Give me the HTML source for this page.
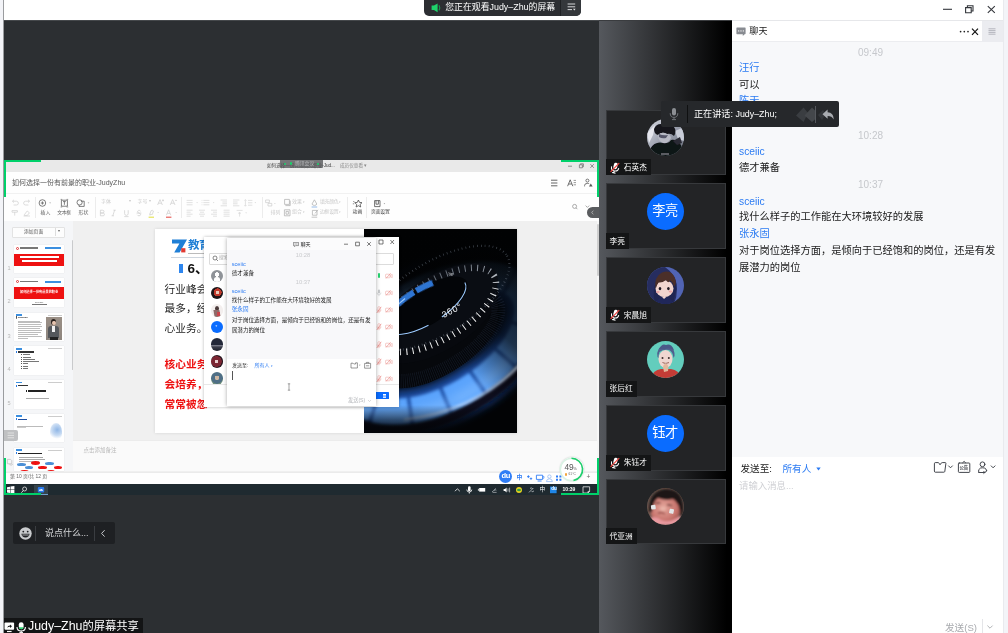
<!DOCTYPE html>
<html lang="zh-CN">
<head>
<meta charset="utf-8">
<title>腾讯会议</title>
<style>
*{box-sizing:border-box;margin:0;padding:0}
html,body{width:1008px;height:633px;overflow:hidden;background:#fff}
body{will-change:transform}
body{position:relative;font-family:"Liberation Sans","Noto Sans CJK SC",sans-serif;color:#1a1a1a;-webkit-font-smoothing:antialiased}
.abs{position:absolute}
.t{position:absolute;white-space:nowrap;line-height:1}
/* ---------- window chrome ---------- */
#topbar{left:0;top:0;width:1008px;height:20px;background:#fff}
#leftstrip{left:0;top:0;width:3px;height:633px;background:#f3f4f8}
#leftline{left:3px;top:0;width:1px;height:633px;background:#9a9c9f}
#rightstrip{left:1003px;top:0;width:5px;height:633px;background:#f3f4f8;border-left:1px solid #e9eaee}
#main{left:4px;top:20px;width:595px;height:613px;background:#2c2f32;border-top:1px solid #45484b}
#notch{left:424.4px;top:0;width:157px;height:16px;background:#2c2e32;border-radius:0 0 5px 5px;overflow:hidden}
#notch .r{left:136px;top:0;width:21px;height:16px;background:#34373b}
/* ---------- participants strip ---------- */
#strip{left:599px;top:20px;width:133px;height:613px;background:linear-gradient(90deg,#55585d 0%,#000 96%);border-top:1px solid #3a3c3f}
.tile{position:absolute;left:605.6px;width:120px;height:65.6px;background:#232426;border:1px solid #37393c}
.tile .av{position:absolute;left:40px;top:8.5px;width:37px;height:37px;border-radius:50%;overflow:hidden}
.tile .lb{position:absolute;left:-1px;bottom:-1px;height:16px;background:#141516;color:#fff;font-size:7.7px;line-height:16px;padding:0 4px 0 4px;white-space:nowrap;display:flex;align-items:center}
.tile .lb svg{margin-right:4.2px;margin-top:1px}.tile .lb span{position:relative;top:.8px}
.txtav{background:#0a6cff;color:#fff;font-size:13.2px;text-align:center;line-height:36px;letter-spacing:-0.3px}
/* ---------- chat panel ---------- */
#chat{left:732px;top:20px;width:271px;height:613px;background:#f7f8fa;border-top:1px solid #e6e7ea}
#chathead{left:0;top:0;width:271px;height:21px;background:#fff;border-bottom:1px solid #ecedf0}
#chatmenu{left:250px;top:0;width:21px;height:21px;background:#ebecf0}
#chatinput{left:0;top:436px;width:271px;height:177px;background:#fff}
.nm{color:#2b7bf3;font-size:10.25px}
.msg{color:#1a1a1a;font-size:10.25px}
.ts{color:#c6c8cc;font-size:10px;left:0;width:277px;text-align:center}
/* ---------- speaking tooltip ---------- */
#tip{left:661px;top:101px;width:178px;height:26px;background:#26282b;border-radius:2px;color:#fff}
/* ---------- shared screen ---------- */
#share{left:4px;top:160px;width:595px;height:335px;background:#f0f0f0;overflow:hidden}

/* shared-screen internals */
#share .g{position:absolute;background:#00d06a}
#share .tb{position:absolute;white-space:nowrap;line-height:1;font-size:4.9px;color:#666}
#share .fa{color:#cacaca}
#share .sep{position:absolute;width:1px;background:#ececec;top:37px;height:21px}
.thumb{position:absolute;left:9.6px;width:50.4px;height:28.5px;background:#fff;overflow:hidden;box-shadow:0 0 1px rgba(0,0,0,.12)}
.thn{position:absolute;left:3.4px;font-size:5.6px;color:#b8b8b8;line-height:1;margin-top:-2px}
</style>
</head>
<body>
<div id="topbar" class="abs">
  <svg class="abs" style="left:940px;top:2px" width="60" height="16" viewBox="0 0 60 16" fill="none" stroke="#33363b" stroke-width="1.1">
    <path d="M3 7.3H12"/>
    <path d="M25.6 5.6H31.2V10.8H25.6Z M27.4 5.4V3.7H33V9H31.4"/>
    <path d="M47.8 4.1L54.8 10.9M54.8 4.1L47.8 10.9"/>
  </svg>
</div>
<div id="main" class="abs">
  <div class="abs" style="left:9px;top:501.3px;width:102px;height:22px;background:#1e2023;border-radius:2px">
    <svg class="abs" style="left:5.5px;top:5px" width="13" height="13" viewBox="0 0 13 13"><circle cx="6.5" cy="6.5" r="6.2" fill="#c9cbce"/><circle cx="4.3" cy="4.6" r=".9" fill="#1e2023"/><circle cx="8.7" cy="4.6" r=".9" fill="#1e2023"/><path d="M2.4 6.8H10.6Q10 10.6 6.5 10.6Q3 10.6 2.4 6.8Z" fill="#1e2023"/><path d="M3.3 7.6H9.7V8.4H3.3Z" fill="#c9cbce"/></svg>
    <div class="abs" style="left:22px;top:3.5px;width:1px;height:15px;background:#3a3d41"></div>
    <div class="t" style="left:32px;top:6.4px;font-size:9px;color:#d7d8da">说点什么...</div>
    <div class="abs" style="left:80.5px;top:3.5px;width:1px;height:15px;background:#3a3d41"></div>
    <svg class="abs" style="left:86px;top:6.5px" width="8" height="9" viewBox="0 0 8 9"><path d="M5.6 1.2L2.6 4.4L5.6 7.6" fill="none" stroke="#c9cbce" stroke-width="1"/></svg>
  </div>
  <div class="abs" style="left:0;top:596.6px;width:139px;height:17px;background:#131415">
    <svg class="abs" style="left:.3px;top:4px" width="24" height="12" viewBox="0 0 24 12"><rect x=".5" y=".5" width="9.6" height="7.2" rx="1" fill="#fff"/><path d="M3 9.5H7.6" stroke="#fff" stroke-width="1.2"/><path d="M3.2 5.8Q3.6 3.6 6 3.5V2.4L8 4.2L6 6V4.8Q4.4 4.7 3.2 5.8Z" fill="#18191b"/><rect x="14.8" y="0.2" width="4.8" height="7" rx="2.4" fill="#fff"/><path d="M14.8 5.2H19.6Q19.4 7.2 17.2 7.2Q15 7.2 14.8 5.2Z" fill="#2fd673"/><path d="M13 5Q13 9 17.2 9Q21.4 9 21.4 5" fill="none" stroke="#fff" stroke-width="1.1"/><path d="M17.2 8.8V10.4M15.4 10.6H19" stroke="#fff" stroke-width="1"/></svg>
    <div class="t" style="left:24px;top:2.9px;font-size:11.3px;color:#fff"><span style="font-size:12.4px">Judy–Zhu</span>的屏幕共享</div>
  </div>
</div>
<div id="strip" class="abs"></div>
<div id="chat" class="abs">
  <div id="chathead" class="abs">
    <svg class="abs" style="left:3.6px;top:5.8px" width="11" height="10" viewBox="0 0 11 10"><path d="M1 0.5H9Q9.6 0.5 9.6 1.1V6.6Q9.6 7.2 9 7.2H8.6L6.8 9V7.2H1Q0.4 7.2 0.4 6.6V1.1Q0.4 0.5 1 0.5Z" fill="#888b91"/><circle cx="2.7" cy="3.9" r=".65" fill="#fff"/><circle cx="5" cy="3.9" r=".65" fill="#fff"/><circle cx="7.3" cy="3.9" r=".65" fill="#fff"/></svg>
    <div class="t" style="left:17.3px;top:5.9px;font-size:9.1px;color:#1a1a1a">聊天</div>
    <svg class="abs" style="left:226px;top:5px" width="22" height="11" viewBox="0 0 22 11"><circle cx="2.6" cy="5.6" r=".85" fill="#222"/><circle cx="6.3" cy="5.6" r=".85" fill="#222"/><circle cx="10" cy="5.6" r=".85" fill="#222"/><path d="M14 2.6L20 8.8M20 2.6L14 8.8" stroke="#111" stroke-width="1.2" fill="none"/></svg>
  </div>
  <div id="chatmenu" class="abs">
    <svg class="abs" style="left:6px;top:7px" width="8" height="7" viewBox="0 0 8 7"><path d="M.5 .8H7.5M.5 2.6H7.5M.5 4.4H7.5M.5 6.2H7.5" stroke="#b4b6bd" stroke-width="1"/></svg>
  </div>
  <div class="t ts" style="top:27px">09:49</div>
  <div class="t nm" style="left:7px;top:42px">汪行</div>
  <div class="t msg" style="left:7px;top:58.5px">可以</div>
  <div class="t nm" style="left:7px;top:75px">陈天</div>
  <div class="t ts" style="top:109.8px">10:28</div>
  <div class="t nm" style="left:7px;top:126px">sceiic</div>
  <div class="t msg" style="left:7px;top:142px">德才兼备</div>
  <div class="t ts" style="top:159px">10:37</div>
  <div class="t nm" style="left:7px;top:175.5px">sceiic</div>
  <div class="t msg" style="left:7px;top:191px">找什么样子的工作能在大环境较好的发展</div>
  <div class="t nm" style="left:7px;top:207.5px">张永固</div>
  <div class="t msg" style="left:7px;top:225px">对于岗位选择方面，是倾向于已经饱和的岗位，还是有发</div>
  <div class="t msg" style="left:7px;top:241.5px">展潜力的岗位</div>
  <div id="chatinput" class="abs">
    <div class="t" style="left:8.5px;top:6.5px;font-size:9.6px;color:#1a1a1a">发送至:</div>
    <div class="t" style="left:50.5px;top:6.5px;font-size:9.6px;color:#2b7bf3">所有人</div>
    <svg class="abs" style="left:83.5px;top:9.5px" width="5" height="4" viewBox="0 0 5 4"><path d="M0.3 .5H4.7L2.5 3.6Z" fill="#2b7bf3"/></svg>
    <svg class="abs" style="left:200px;top:3.4px" width="66" height="15" viewBox="0 0 66 15" fill="none" stroke="#43464d" stroke-width="1" stroke-linejoin="round" stroke-linecap="round">
      <path d="M2.4 3.4Q2.4 2.6 3.2 2.6H6.2Q6.8 2.6 7.2 3.4L8 4.8L9.4 2.9Q9.7 2.6 10.2 2.6H13.2Q14 2.6 13.9 3.4L12.8 11.4Q12.7 12.2 11.9 12.2H3.2Q2.4 12.2 2.4 11.4Z"/>
      <path d="M16.6 5.9L18.5 7.8L20.4 5.9" stroke-width="1"/>
      <path d="M27.2 3H37Q37.8 3 37.8 3.8V11.6Q37.8 12.4 37 12.4H27.2Q26.4 12.4 26.4 11.6V3.8Q26.4 3 27.2 3Z"/>
      <path d="M30.6 2.8L32.1 1.3L33.6 2.8" stroke-width=".9"/>
      <path d="M46.6 12.4Q45.8 9 48.6 8Q50.5 7.6 52.4 8Q54.6 8.8 54.6 10.6M47 12.5H52.6M52.6 12.5Q54.4 12.4 54.8 10.6M51.8 11.4L52.8 12.5L51.8 13.4" />
      <path d="M59.2 5.9L61.1 7.8L63 5.9" stroke-width="1"/><circle cx="50.5" cy="4.3" r="2.4"/>
    </svg>
    <div class="t" style="left:227.6px;top:8.8px;font-size:4.4px;font-weight:bold;color:#43464d;letter-spacing:-.2px">公告</div>
    <div class="t" style="left:7px;top:24px;font-size:9.4px;color:#cfd0d4">请输入消息...</div>
    <div class="t" style="left:213px;top:165.5px;font-size:9.6px;color:#a8aaae">发送(S)</div>
    <div class="abs" style="left:250px;top:162px;width:1px;height:15px;background:#e4e5e8"></div>
    <svg class="abs" style="left:254px;top:167px" width="8" height="6" viewBox="0 0 8 6"><path d="M1.4 1.6L4 4.2L6.6 1.6" fill="none" stroke="#a8aaae" stroke-width=".9"/></svg>
  </div>
</div>
<div id="share" class="abs">
  <!-- title strip -->
  <div class="abs" style="left:0;top:0;width:595px;height:11.8px;background:#e9e9e9"></div>
  <div class="t" style="left:263px;top:4.4px;font-size:4.6px;color:#333">如何选择一份有前景的职业-Jud...</div>
  <div class="t" style="left:336px;top:4.4px;font-size:4.6px;color:#888">成员仅查看 ▾</div>
  <div class="abs" style="left:276px;top:0;width:43px;height:8px;background:rgba(84,86,88,.78);border-radius:0 0 1px 1px">
    <div class="abs" style="left:4px;top:3px;width:2px;height:2px;border-radius:50%;background:#19d36b"></div>
    <div class="abs" style="left:10px;top:2.4px;width:2.4px;height:2.4px;border-radius:50%;background:#19d36b"></div>
    <div class="t" style="left:15px;top:1.5px;font-size:4.8px;color:#b9bbbd">腾讯会议</div>
    <div class="abs" style="left:36.5px;top:2.6px;width:2.2px;height:2.2px;border-radius:50%;background:#19d36b"></div>
  </div>
  <svg class="abs" style="left:560px;top:2px" width="34" height="8" viewBox="0 0 34 8" fill="none" stroke="#666" stroke-width=".7"><path d="M4 4.2H8"/><path d="M15.4 2.8H18.4V5.8H15.4Z M16.4 2.6V1.8H19.4V4.8H18.6"/><path d="M26.4 2.2L29.8 5.8M29.8 2.2L26.4 5.8"/></svg>
  <!-- doc header -->
  <div class="abs" style="left:0;top:11.8px;width:595px;height:22.2px;background:#fefefe;border-bottom:1px solid #f1f1f1"></div>
  <div class="t" style="left:8px;top:19.4px;font-size:7px;color:#585858">如何选择一份有前景的职业-JudyZhu</div>
  <svg class="abs" style="left:544px;top:17px" width="48" height="12" viewBox="0 0 48 12" fill="none" stroke="#555" stroke-width=".9"><path d="M3 3.2H9.4M3 6H9.4M3 8.8H9.4"/><path d="M19.6 9.2L22.2 2.8L24.8 9.2M20.6 7H23.8" stroke-width=".85"/><path d="M25.6 3.4H28M25.6 5.6H28M25.6 7.8H28" stroke-width=".6"/><circle cx="39.4" cy="3.6" r="1.5" stroke-width=".8"/><path d="M36.6 9.4V8.4Q36.6 6.4 39.4 6.4Q40.6 6.4 41.2 6.8" stroke-width=".8"/><path d="M41 9.4L42.8 6.4L44.6 9.4Z" fill="#555" stroke="none"/></svg>
  <!-- toolbar -->
  <div class="abs" style="left:0;top:34px;width:595px;height:27px;background:#fefefe"></div>
  <svg class="abs" style="left:5px;top:37px" width="28" height="22" viewBox="0 0 28 22" fill="none" stroke="#cfcfcf" stroke-width=".7"><path d="M3.6 4.2H7.4Q9.4 4.4 9.4 6.2Q9.4 8 7.4 8H4.6M5 2.8L3.4 4.2L5 5.6"/><path d="M20.4 4.2H16.6Q14.6 4.4 14.6 6.2Q14.6 8 16.6 8H19.4M19 2.8L20.6 4.2L19 5.6"/><path d="M3 13.6H8.4V15.2H3Z M5.7 15.2V18.6"/><path d="M15.4 17.6L18.2 14L20.4 15.8L18.4 18.4H15.4ZM14.6 19H21"/></svg>
  <div class="sep" style="left:30.5px"></div>
  <svg class="abs" style="left:32px;top:37px" width="58" height="12" viewBox="0 0 58 12" fill="none" stroke="#555" stroke-width=".75"><circle cx="6.4" cy="6" r="3.3"/><path d="M4.8 6H8M6.4 4.4V7.6"/><path d="M13.2 5.4H15L14.1 6.6Z" fill="#999" stroke="none"/><path d="M25.4 3.2H31.4V9.2H25.4Z M27 4.6H29.8M28.4 4.6V7.8" /><path d="M24.6 2.4H26.2M30.6 2.4H32.2M24.6 10H26.2M30.6 10H32.2" stroke-width=".6"/><circle cx="43.6" cy="5.4" r="2.6"/><path d="M45 4.2H48.2V9.4H43V8"/><path d="M51.6 5.4H53.4L52.5 6.6Z" fill="#999" stroke="none"/></svg>
  <div class="tb" style="left:36.5px;top:50.6px">插入</div>
  <div class="tb" style="left:53.2px;top:50.6px;letter-spacing:-.3px">文本框</div>
  <div class="tb" style="left:74.6px;top:50.6px">形状</div>
  <div class="sep" style="left:90.5px"></div>
  <div class="tb fa" style="left:97px;top:39.6px">字体</div>
  <div class="tb fa" style="left:125px;top:40px;font-size:3.6px">▾</div>
  <div class="tb fa" style="left:133.6px;top:39.6px">字号</div>
  <div class="tb fa" style="left:145px;top:40px;font-size:3.6px">▾</div>
  <svg class="abs" style="left:93px;top:37px" width="90" height="22" viewBox="0 0 90 22" fill="none" stroke="#cdcdcd" stroke-width=".7"><path d="M60.6 8L63 2.6L65.4 8M61.4 6.2H64.6M66 2.4V4.4M65 3.4H67" /><path d="M73.2 8L75.6 2.6L78 8M74 6.2H77.2M78 3.4H80"/><path d="M3.4 13.2H5.8Q7 13.4 7 14.6Q7 15.8 5.8 16H3.4ZM3.4 16H6.2Q7.4 16.2 7.4 17.4Q7.4 18.8 6.2 18.8H3.4Z"/><path d="M17.6 13.2L15.8 18.8M16.4 13.2H18.8M14.6 18.8H17"/><path d="M27.6 13.2V16.6Q27.6 18.4 29.4 18.4Q31.2 18.4 31.2 16.6V13.2M27.2 19.6H31.6"/><path d="M43.6 14.2Q42.8 13.2 41.6 13.4Q40.4 13.8 40.6 15Q41 16 42.2 16.2Q43.6 16.6 43.6 17.6Q43.4 18.8 42 18.8Q40.8 18.8 40.2 17.8M39.6 16.1H44.4"/><path d="M52.6 17.4L54.2 13.6Q55.4 12.8 56.4 14L55.4 17.4ZM53 17.6V18.6" /><path d="M51.6 20.2H57" stroke="#e3e04a" stroke-width="1.1"/><path d="M69.4 18.2L71.6 12.8L73.8 18.2M70.2 16.4H73"/><path d="M69 20.2H74.4" stroke="#e5524d" stroke-width="1.1"/><path d="M60.4 15H61.8L61.1 16Z M78.4 15H79.8L79.1 16Z" fill="#ccc" stroke="none"/></svg>
  <div class="sep" style="left:177px"></div>
  <svg class="abs" style="left:180px;top:37px" width="80" height="22" viewBox="0 0 80 22" fill="none" stroke="#d5d5d5" stroke-width=".7"><path d="M2.6 3.4H8.6M2.6 5.6H8.6M2.6 7.8H8.6"/><path d="M19.4 3.4H25.4M19.4 5.6H25.4M19.4 7.8H25.4M17.6 3.4H18.4M17.6 5.6H18.4M17.6 7.8H18.4"/><path d="M36.6 3H43M38.4 5H43M38.4 6.8H43M36.6 8.8H43"/><path d="M49 3H55.4M49 5H53.6M49 6.8H53.6M49 8.8H55.4"/><path d="M61.4 2.6V9.2M60.4 3.6L61.4 2.6L62.4 3.6M60.4 8.2L61.4 9.2L62.4 8.2M64 3.4H68.4M64 5.8H68.4M64 8.2H68.4"/><path d="M2.6 13.2H8.6M2.6 15.2H6.6M2.6 17.2H8.6M2.6 19.2H6.6"/><path d="M15 13.2H21M16 15.2H20M15 17.2H21M16 19.2H20"/><path d="M27 13.2H33M29 15.2H33M27 17.2H33M29 19.2H33"/><path d="M39.6 13.2H45.6M39.6 15.2H45.6M39.6 17.2H45.6M39.6 19.2H45.6"/><path d="M52.6 13.4H58.6M55.6 15V19.6M54.2 16.2H57" /><path d="M12.4 5.2H13.8L13.1 6.2Z M29 5.2H30.4L29.7 6.2Z M70.6 5.2H72L71.3 6.2Z M61.4 15.6H62.8L62.1 16.6Z" fill="#ccc" stroke="none"/></svg>
  <div class="sep" style="left:257.5px"></div>
  <svg class="abs" style="left:258px;top:37px" width="90" height="22" viewBox="0 0 90 22" fill="none" stroke="#cdcdcd" stroke-width=".7"><path d="M3.6 3H7.4V5.6H3.6ZM6 6.4H9.8V9H6Z"/><path d="M12.2 6H13.6L12.9 7Z" fill="#ccc" stroke="none"/><path d="M22.6 2.4H27.4V7.4H22.6ZM23.4 8.6H28.2V3.6" stroke="#aaa"/><path d="M22.4 12.8H28V18.8H22.4ZM24 14.4H26.4V17.2H24Z" stroke="#aaa"/><path d="M50 7L52.4 2.8L54.8 7Q54.4 8.4 52.4 8.4Q50.4 8.4 50 7Z" stroke="#aaa"/><path d="M49.6 10H55.2" stroke="#8ab4e8" stroke-width=".9"/><path d="M50.4 13.4H55V18.2H50.4ZM53 16.4L56 12.8" stroke="#aaa"/><path d="M49.6 20.2H55.2" stroke="#bbb" stroke-width=".9"/></svg>
  <div class="tb fa" style="left:266.5px;top:50.6px">排列</div>
  <div class="tb fa" style="left:288px;top:39.8px">效果 <span style="font-size:3.4px">▾</span></div>
  <div class="tb fa" style="left:288px;top:50.4px">组合 <span style="font-size:3.4px">▾</span></div>
  <div class="tb fa" style="left:316px;top:39.8px;letter-spacing:-.3px">填充颜色 <span style="font-size:3.4px">▾</span></div>
  <div class="tb fa" style="left:316px;top:50.4px;letter-spacing:-.3px">边框设置 <span style="font-size:3.4px">▾</span></div>
  <div class="sep" style="left:343px"></div>
  <svg class="abs" style="left:346px;top:38px" width="46" height="12" viewBox="0 0 46 12" fill="none" stroke="#444" stroke-width=".75"><path d="M8.4 2L9.5 4.4L12 4.7L10.1 6.4L10.7 9L8.4 7.7L6.1 9L6.7 6.4L4.8 4.7L7.3 4.4Z"/><path d="M3.2 3.4L4.6 4M2.8 5.8H4.2" stroke-width=".6"/><path d="M24.6 2.6H30V8.6H24.6ZM26 2.6V6.2H28.4V2.6" /><path d="M33.6 5.2H35.2L34.4 6.2Z" fill="#888" stroke="none"/></svg>
  <div class="tb" style="left:348.5px;top:50.4px;color:#444">动画</div>
  <div class="sep" style="left:362px"></div>
  <div class="tb" style="left:367px;top:50.4px;color:#444;letter-spacing:-.25px">页面设置</div>
  <svg class="abs" style="left:566px;top:42px" width="24" height="10" viewBox="0 0 24 10" fill="none" stroke="#888" stroke-width=".7"><circle cx="4.6" cy="4.4" r="2"/><path d="M6 5.8L7.4 7.2"/><path d="M15.6 3.6L17.4 5.4L19.2 3.6"/></svg>
  <!-- body -->
  <div class="abs" style="left:0;top:61px;width:69px;height:250px;background:#f5f6f8"></div>
  <div class="abs" style="left:69px;top:61px;width:526px;height:219px;background:#f0f0f0"></div>
  <div class="abs" style="left:8px;top:66.5px;width:53px;height:11px;background:#fdfdfd;border:.5px solid #e3e3e3;border-radius:1px"></div>
  <div class="abs" style="left:51px;top:68px;width:.6px;height:8px;background:#ddd"></div>
  <div class="tb" style="left:20px;top:69.6px;font-size:4.8px;color:#555">添加页面</div>
  <div class="tb" style="left:54.4px;top:70px;font-size:3.6px;color:#666">▾</div>
  <div class="abs" style="left:67.5px;top:80px;width:1.6px;height:130px;background:#c9cacc;border-radius:1px"></div>
  <div class="thumb" style="top:84.6px;height:28.5px"><div class="abs" style="left:2px;top:2px;width:3px;height:3px;border-radius:50%;border:.7px solid #d33"></div><div class="abs" style="left:6.0px;top:2.8px;width:18.0px;height:1.2px;background:#777"></div><div class="abs" style="left:31.0px;top:2.6px;width:16.0px;height:1.6px;background:#3b8fe0"></div><div class="abs" style="left:0.0px;top:9.0px;width:51.0px;height:12.5px;background:#ee1111"></div><div class="abs" style="left:6.0px;top:11.4px;width:39.0px;height:1.8px;background:#fff"></div><div class="abs" style="left:8.0px;top:15.6px;width:35.0px;height:1.8px;background:#fff"></div></div><div class="thn" style="top:107.6px">1</div>
  <div class="thumb" style="top:118.4px;height:28.5px"><div class="abs" style="left:2px;top:2px;width:3px;height:3px;border-radius:50%;border:.7px solid #d33"></div><div class="abs" style="left:6.0px;top:2.8px;width:18.0px;height:1.2px;background:#777"></div><div class="abs" style="left:31.0px;top:2.6px;width:16.0px;height:1.6px;background:#3b8fe0"></div><div class="abs" style="left:0.0px;top:8.6px;width:51.0px;height:12.5px;background:#ee1111"></div><div class="t" style="left:0;width:51px;text-align:center;top:13px;font-size:3.2px;color:#fff;font-weight:bold">如何选择一份有前景的职业</div><div class="t" style="left:0;width:51px;text-align:center;top:22.4px;font-size:2.2px;color:#555">JudyZhu</div><div class="abs" style="left:18.0px;top:25.6px;width:15.0px;height:0.8px;background:#777"></div></div><div class="thn" style="top:141.4px">2</div>
  <div class="thumb" style="top:152.5px;height:28.5px"><div class="abs" style="left:2.0px;top:1.8px;width:6.0px;height:1.5px;background:#3b8fe0"></div><div class="abs" style="left:34.0px;top:2.2px;width:14.0px;height:0.6px;background:#ccc"></div><div class="t" style="left:2.5px;top:4.6px;font-size:2.4px;color:#333;font-weight:bold">▌JudyZhu</div><div class="abs" style="left:4.0px;top:8.0px;width:22.0px;height:0.6px;background:#bdbdbd"></div><div class="abs" style="left:4.0px;top:9.9px;width:24.0px;height:0.6px;background:#bdbdbd"></div><div class="abs" style="left:4.0px;top:11.8px;width:23.0px;height:0.6px;background:#bdbdbd"></div><div class="abs" style="left:4.0px;top:13.7px;width:24.0px;height:0.6px;background:#bdbdbd"></div><div class="abs" style="left:4.0px;top:15.6px;width:22.0px;height:0.6px;background:#bdbdbd"></div><div class="abs" style="left:4.0px;top:17.5px;width:24.0px;height:0.6px;background:#bdbdbd"></div><div class="abs" style="left:4.0px;top:19.4px;width:23.0px;height:0.6px;background:#bdbdbd"></div><div class="abs" style="left:4.0px;top:21.3px;width:20.0px;height:0.6px;background:#bdbdbd"></div><div class="abs" style="left:4.0px;top:23.2px;width:24.0px;height:0.6px;background:#bdbdbd"></div><div class="abs" style="left:4.0px;top:25.1px;width:10.0px;height:0.6px;background:#bdbdbd"></div><div class="abs" style="left:32px;top:4.5px;width:16px;height:23px;background:linear-gradient(180deg,#9a8f86 0%,#8d857e 100%)"><div class="abs" style="left:5.4px;top:2px;width:5.4px;height:6.4px;border-radius:50%;background:#2a211d"></div><div class="abs" style="left:6.2px;top:3.6px;width:3.8px;height:4.6px;border-radius:50%;background:#e6c3ae"></div><div class="abs" style="left:2.6px;top:8.6px;width:11px;height:12px;border-radius:3px 3px 0 0;background:#55585c"></div><div class="abs" style="left:6.6px;top:8.6px;width:3px;height:6px;background:#f1f1f1"></div><div class="abs" style="left:4px;top:20px;width:8.4px;height:3px;background:#222"></div></div></div><div class="thn" style="top:175.5px">3</div>
  <div class="thumb" style="top:186.3px;height:28.5px"><div class="abs" style="left:2.0px;top:1.8px;width:6.0px;height:1.5px;background:#3b8fe0"></div><div class="abs" style="left:34.0px;top:2.2px;width:14.0px;height:0.6px;background:#ccc"></div><div class="abs" style="left:2.5px;top:4.8px;width:1.0px;height:2.0px;background:#2a7be4"></div><div class="abs" style="left:4.5px;top:5.0px;width:16.0px;height:1.3px;background:#333"></div><div class="abs" style="left:9.0px;top:8.0px;width:7.0px;height:0.6px;background:#777"></div><div class="abs" style="left:7.0px;top:8.0px;width:0.7px;height:0.7px;background:#555"></div><div class="abs" style="left:9.0px;top:10.3px;width:8.0px;height:0.6px;background:#777"></div><div class="abs" style="left:7.0px;top:10.3px;width:0.7px;height:0.7px;background:#555"></div><div class="abs" style="left:9.0px;top:12.6px;width:12.0px;height:0.6px;background:#777"></div><div class="abs" style="left:7.0px;top:12.6px;width:0.7px;height:0.7px;background:#555"></div><div class="abs" style="left:9.0px;top:14.9px;width:16.0px;height:0.6px;background:#777"></div><div class="abs" style="left:7.0px;top:14.9px;width:0.7px;height:0.7px;background:#555"></div><div class="abs" style="left:9.0px;top:17.2px;width:5.0px;height:0.6px;background:#777"></div><div class="abs" style="left:7.0px;top:17.2px;width:0.7px;height:0.7px;background:#555"></div><div class="abs" style="left:9.0px;top:19.5px;width:5.0px;height:0.6px;background:#777"></div><div class="abs" style="left:7.0px;top:19.5px;width:0.7px;height:0.7px;background:#555"></div><div class="abs" style="left:9.0px;top:21.8px;width:5.0px;height:0.6px;background:#777"></div><div class="abs" style="left:7.0px;top:21.8px;width:0.7px;height:0.7px;background:#555"></div></div><div class="thn" style="top:209.3px">4</div>
  <div class="thumb" style="top:220.0px;height:28.5px"><div class="abs" style="left:2.0px;top:1.8px;width:6.0px;height:1.5px;background:#3b8fe0"></div><div class="abs" style="left:34.0px;top:2.2px;width:14.0px;height:0.6px;background:#ccc"></div><div class="abs" style="left:2.5px;top:4.8px;width:1.0px;height:2.0px;background:#2a7be4"></div><div class="abs" style="left:4.5px;top:5.0px;width:10.0px;height:1.3px;background:#333"></div><div class="abs" style="left:12.0px;top:10.4px;width:1.5px;height:1.6px;background:#222"></div><div class="abs" style="left:14.5px;top:10.4px;width:18.0px;height:1.6px;background:#222"></div><div class="abs" style="left:12.0px;top:17.6px;width:23.0px;height:0.6px;background:#aaa"></div></div><div class="thn" style="top:243.0px">5</div>
  <div class="thumb" style="top:253.7px;height:28.5px"><div class="abs" style="left:2.0px;top:1.8px;width:6.0px;height:1.5px;background:#3b8fe0"></div><div class="abs" style="left:34.0px;top:2.2px;width:14.0px;height:0.6px;background:#ccc"></div><div class="abs" style="left:2.5px;top:4.8px;width:1.0px;height:2.0px;background:#2a7be4"></div><div class="abs" style="left:4.5px;top:5.0px;width:9.0px;height:1.3px;background:#1f4fa0"></div><div class="abs" style="left:3.0px;top:12.0px;width:26.0px;height:0.6px;background:#bbb"></div><div class="abs" style="left:3.0px;top:13.8px;width:9.0px;height:0.6px;background:#ccc"></div><div class="abs" style="left:36px;top:9px;width:12px;height:17px;border-radius:50% 50% 40% 40%;background:radial-gradient(circle at 60% 40%,#8fb6e6 0,#c9dcf3 45%,rgba(255,255,255,0) 72%)"></div></div><div class="thn" style="top:276.7px">6</div>
  <div class="thumb" style="top:287.5px;height:23.0px"><div class="abs" style="left:2.0px;top:1.8px;width:6.0px;height:1.5px;background:#3b8fe0"></div><div class="abs" style="left:34.0px;top:2.2px;width:14.0px;height:0.6px;background:#ccc"></div><div class="abs" style="left:2.5px;top:4.8px;width:1.0px;height:2.0px;background:#2a7be4"></div><div class="abs" style="left:4.5px;top:5.0px;width:24.0px;height:1.3px;background:#222"></div><div class="abs" style="left:5.0px;top:9.0px;width:24.0px;height:0.5px;background:#aaa"></div><div class="abs" style="left:5.0px;top:11.0px;width:26.0px;height:0.5px;background:#aaa"></div><div class="abs" style="left:5.0px;top:13.0px;width:20.0px;height:0.5px;background:#bbb"></div><div class="abs" style="left:3.5px;top:15.0px;width:8.6px;height:3.8px;border-radius:50%;background:#4a8fd6"></div><div class="abs" style="left:17.6px;top:13.6px;width:8.6px;height:3.8px;border-radius:50%;background:#ee1111"></div><div class="abs" style="left:31.5px;top:14.0px;width:8.6px;height:3.8px;border-radius:50%;background:#4a8fd6"></div><div class="abs" style="left:11.0px;top:18.2px;width:8.6px;height:3.8px;border-radius:50%;background:#4a8fd6"></div><div class="abs" style="left:24.4px;top:18.2px;width:8.6px;height:3.8px;border-radius:50%;background:#ee1111"></div><div class="abs" style="left:40.0px;top:18.0px;width:8.6px;height:3.8px;border-radius:50%;background:#ee1111"></div><div class="abs" style="left:6.5px;top:22.4px;width:8.6px;height:3.8px;border-radius:50%;background:#ee1111"></div><div class="abs" style="left:33.0px;top:22.6px;width:8.6px;height:3.8px;border-radius:50%;background:#ee1111"></div></div>
  <div class="abs" style="left:0;top:269.5px;width:13.5px;height:11.5px;background:#bfc0c2;border-radius:0 2px 2px 0"><svg class="abs" style="left:3px;top:2.6px" width="8" height="7" viewBox="0 0 8 7"><path d="M.6 1H7M.6 3.4H7M.6 5.8H7" stroke="#e8e8e8" stroke-width=".8"/></svg></div>
  <svg class="abs" style="left:2px;top:298px" width="8" height="9" viewBox="0 0 8 9" fill="none" stroke="#bbb" stroke-width=".7"><path d="M1.4 1.4H4.6L5.8 2.6V5.8H1.4ZM3.4 6.6Q5.4 7.8 6.8 6.4"/></svg>
  <!-- slide -->
  <div class="abs" style="left:151px;top:69px;width:362px;height:204px;background:#fff;box-shadow:0 0 3px rgba(0,0,0,.12)"></div>
  <svg class="abs" style="left:167px;top:79px" width="17" height="14" viewBox="0 0 17 14"><path d="M1 .6H16L8.6 13.4H3.2L8.4 4.6H1Z" fill="#1f7fd6"/><rect x="10.2" y="9.2" width="4.2" height="4.2" fill="#e23b32"/></svg>
  <div class="t" style="left:184px;top:80px;font-size:11.5px;font-weight:bold;color:#1f7fd6;letter-spacing:-.5px">教育</div>
  <div class="abs" style="left:184px;top:93px;width:30px;height:.6px;background:#bbb"></div>
  <div class="abs" style="left:167px;top:97px;width:190px;height:.6px;background:#cfd6de"></div>
  <div class="abs" style="left:174.8px;top:103.5px;width:4px;height:9.5px;background:#2e86ee"></div>
  <div class="t" style="left:183.5px;top:101.5px;font-size:13.5px;font-weight:bold;color:#111">6、</div>
  <div class="t" style="left:160.6px;top:123.6px;font-size:10.7px;color:#222">行业峰会</div>
  <div class="t" style="left:160.6px;top:143.2px;font-size:10.7px;color:#222">最多，经</div>
  <div class="t" style="left:160.6px;top:162.8px;font-size:10.7px;color:#222">心业务。</div>
  <div class="t" style="left:160.6px;top:199px;font-size:10.7px;font-weight:bold;color:#ee1111">核心业务</div>
  <div class="t" style="left:160.6px;top:218.8px;font-size:10.7px;font-weight:bold;color:#ee1111">会培养，</div>
  <div class="t" style="left:160.6px;top:238.6px;font-size:10.7px;font-weight:bold;color:#ee1111">常常被忽</div>
  <svg class="abs" style="left:359.6px;top:69px" width="153.4" height="204" viewBox="0 0 154 204" preserveAspectRatio="none">
    <defs>
      <filter id="b1" x="-20%" y="-20%" width="140%" height="140%"><feGaussianBlur stdDeviation="1.4"/></filter>
      <filter id="b3" x="-30%" y="-30%" width="160%" height="160%"><feGaussianBlur stdDeviation="5"/></filter>
      <filter id="b05" x="-20%" y="-20%" width="140%" height="140%"><feGaussianBlur stdDeviation=".45"/></filter>
      <linearGradient id="fadeTop" x1="0" y1="0" x2=".35" y2="1"><stop offset="0" stop-color="#010203" stop-opacity="1"/><stop offset=".34" stop-color="#010203" stop-opacity=".86"/><stop offset=".58" stop-color="#010203" stop-opacity="0"/></linearGradient>
      <linearGradient id="fadeBot" x1="0" y1="0" x2="0" y2="1"><stop offset="0" stop-color="#020305" stop-opacity="0"/><stop offset=".55" stop-color="#020305" stop-opacity=".6"/><stop offset="1" stop-color="#020305" stop-opacity=".92"/></linearGradient>
      <linearGradient id="fadeR" x1="1" y1="0" x2=".55" y2=".62"><stop offset="0" stop-color="#010203" stop-opacity="1"/><stop offset=".62" stop-color="#010203" stop-opacity=".72"/><stop offset="1" stop-color="#010203" stop-opacity="0"/></linearGradient>
      <linearGradient id="tk" gradientUnits="userSpaceOnUse" x1="0" y1="-30" x2="0" y2="22"><stop offset="0" stop-color="#5d6570"/><stop offset=".55" stop-color="#aab1bb"/><stop offset="1" stop-color="#ffffff"/></linearGradient>
      <clipPath id="imgc"><rect width="154" height="204"/></clipPath>
    </defs>
    <g clip-path="url(#imgc)">
      <rect width="154" height="204" fill="#020305"/>
      <g transform="translate(74 114) rotate(-30)">
        <ellipse rx="100" ry="56" fill="none" stroke="#1b4ea3" stroke-width="44" filter="url(#b3)"/>
        <ellipse rx="101" ry="57" fill="none" stroke="#5aa3fc" stroke-width="30" stroke-dasharray="34 3.5" filter="url(#b1)"/>
        <ellipse rx="103" ry="59" fill="none" stroke="#8cc2ff" stroke-width="10" stroke-dasharray="34 3.5" filter="url(#b3)" opacity=".55"/>
        <ellipse rx="119" ry="73" fill="none" stroke="#07101f" stroke-width="10" filter="url(#b1)"/>
      </g>
      <rect width="154" height="204" fill="url(#fadeR)"/>
      <rect width="154" height="204" fill="url(#fadeTop)"/>
      <g transform="translate(74 78) rotate(-31)">
        <ellipse cx="-19" cy="32" rx="68" ry="31" fill="#05070b"/>
        <ellipse cx="-13" cy="22" rx="68" ry="31" fill="#06080c"/>
        <ellipse cx="-6" cy="11" rx="68" ry="31" fill="#07090e"/>
        <ellipse cx="-15" cy="26" rx="68" ry="31" fill="none" stroke="#27324a" stroke-width="14" stroke-dasharray=".6 1.5" opacity=".45"/>
        <ellipse rx="68" ry="31" fill="#0a0d13"/>
        <ellipse cx="4" cy="-8" rx="82" ry="36" fill="none" stroke="#7c8694" stroke-width="2.2" stroke-dasharray=".7 3.2" opacity=".5"/>
        <ellipse cx="-1.5" cy="2.5" rx="66" ry="29" fill="none" stroke="url(#tk)" stroke-width="6.5" stroke-dasharray="1 5.3" opacity=".95"/>
        <ellipse cx="-10" cy="-7" rx="48" ry="19" fill="#030508"/>
        <ellipse cx="-12" cy="-11" rx="42" ry="14" fill="none" stroke="#2f74d2" stroke-width="6" stroke-dasharray="0 96 20 3 20 3 18 400" filter="url(#b05)"/>
        <ellipse cx="-10" cy="-7" rx="46" ry="18" fill="none" stroke="#9ccaff" stroke-width="1.1" stroke-dasharray="44 16 84 400"/>
      </g>
      <text x="80" y="89" font-size="8.8" fill="#f3f5f8" font-family="Liberation Sans,sans-serif" letter-spacing=".9" transform="rotate(-27 80 89)">360°</text>
      <text x="84" y="46" font-size="4" fill="#dfe3e8" font-family="Liberation Sans,sans-serif" transform="rotate(10 84 46)">'08</text>
      <path d="M156 136Q112 182 40 191" stroke="#dcebff" stroke-width="2.2" fill="none" filter="url(#b1)" opacity=".8"/>
      <rect x="0" y="176" width="154" height="28" fill="url(#fadeBot)"/>
    </g>
  </svg>
  <!-- notes -->
  <div class="abs" style="left:69px;top:280px;width:526px;height:31px;background:#fafafa;border-top:1px solid #ececec"></div>
  <div class="t" style="left:79.5px;top:287.8px;font-size:5.5px;color:#b9b9b9">点击添加备注</div>
  <div class="abs" style="left:592.5px;top:61px;width:2.5px;height:250px;background:#f7f7f7"></div>
  <div class="abs" style="left:593px;top:64px;width:1.6px;height:52px;background:#cfcfcf;border-radius:1px"></div>
  <!-- status bar -->
  <div class="abs" style="left:0;top:311.6px;width:595px;height:12px;background:#fefefe;border-top:1px solid #ebebeb"></div>
  <div class="t" style="left:6px;top:315px;font-size:4.9px;color:#666;margin-top:.4px">第 10 页/共 12 页</div>
  <div class="abs" style="left:495.4px;top:309.5px;width:13px;height:13px;border-radius:50%;background:#2f7df6"></div>
  <div class="t" style="left:497.6px;top:311.8px;font-size:7.6px;color:#fff;font-weight:bold;letter-spacing:-.4px">du</div>
  <div class="t" style="left:512.6px;top:315px;font-size:5.8px;color:#2f7df6;font-weight:bold">中</div>
  <svg class="abs" style="left:521px;top:313px" width="45" height="10" viewBox="0 0 45 10" fill="none" stroke="#2f7df6" stroke-width=".9"><circle cx="3.4" cy="3.6" r=".8" fill="#2f7df6"/><circle cx="6" cy="5.6" r=".7" fill="#2f7df6"/><path d="M11.4 2.2H17.6V6.4H11.4ZM12.6 8H16.6" /><path d="M18 3.4H19V5.2H18" stroke-width=".6"/><circle cx="24.4" cy="3.6" r="1.7" stroke="#9dbff5"/><path d="M21.4 8.6Q21.6 5.8 24.4 5.8Q27.2 5.8 27.4 8.6Z" stroke="#9dbff5"/><path d="M31 2.4H33V4.4H31ZM34.4 2.4H36.4V4.4H34.4ZM31 5.8H33V7.8H31ZM34.4 5.8H36.4V7.8H34.4Z" fill="#2f7df6" stroke="none"/></svg>
  <div class="t" style="left:582.4px;top:314.4px;font-size:6.6px;color:#666">+</div>
  <div class="abs" style="left:555.7px;top:297.4px;width:24px;height:24px;border-radius:50%;background:#fff;box-shadow:0 0 1.5px rgba(0,0,0,.25)"></div>
  <svg class="abs" style="left:555.2px;top:296.9px" width="25" height="25" viewBox="0 0 25 25" fill="none"><circle cx="12.5" cy="12.5" r="11.2" stroke="#d9f3e4" stroke-width="1.5"/><path d="M12.5 1.3A11.2 11.2 0 0 1 14.5 23.5" stroke="#1fce6d" stroke-width="1.6"/></svg>
  <div class="t" style="left:560.6px;top:303.4px;font-size:8.3px;color:#555;letter-spacing:-.3px">49<span style="font-size:4px">%</span></div>
  <div class="abs" style="left:561px;top:313px;width:1.6px;height:2.6px;border-radius:1px;background:#f3a53a"></div>
  <div class="t" style="left:564.6px;top:313.2px;font-size:3.2px;color:#666">61°C</div>
  <!-- taskbar -->
  <div class="abs" style="left:0;top:323.5px;width:595px;height:11.5px;background:#1f2a30"></div>
  <svg class="abs" style="left:.6px;top:324.5px" width="44" height="10" viewBox="0 0 44 10"><rect x="29" y="0" width="14" height="10" fill="#35434b"/><rect x="29" y="9.2" width="14" height=".8" fill="#7db7f0"/><path d="M2 2.2L5 1.7V4.6H2ZM5.5 1.6L9.4 1V4.6H5.5ZM2 5.1H5V8L2 7.5ZM5.5 5.1H9.4V8.8L5.5 8.1Z" fill="#fff"/><circle cx="19.6" cy="4" r="2" fill="none" stroke="#fff" stroke-width=".7"/><path d="M18.2 5.6L16.4 7.8" stroke="#fff" stroke-width=".8"/><rect x="32.8" y="2" width="6.4" height="5.6" rx="1" fill="#2a79ea"/><path d="M33.8 5.8Q34.4 3.6 35.8 4.6Q37 3 38.2 5.8Z" fill="#fff"/></svg>
  <svg class="abs" style="left:448px;top:324.5px" width="140" height="10" viewBox="0 0 140 10" fill="none" stroke="#fff" stroke-width=".8"><path d="M3 6.2L5.4 3.8L7.8 6.2"/><rect x="16" y="1.2" width="2.6" height="5" rx="1.3" fill="#fff" stroke="none"/><path d="M14.8 4.6Q14.8 7 17.3 7Q19.8 7 19.8 4.6M17.3 7V8.6"/><rect x="27.2" y="3" width="6" height="3.6" fill="#fff" stroke="none"/><path d="M26.4 3.8V5.8" /><path d="M40 7L44 3.4M40.6 7.4H44.6M42 5.4Q43 4.4 44.4 5.2" stroke-width=".6" stroke="#cfd3d6"/><path d="M51.6 4H53L54.6 2.4V7.6L53 6H51.6Z" fill="#fff" stroke="none"/><path d="M56 3.4V6.6M57.6 2.6V7.4" stroke-width=".6"/><circle cx="67" cy="5" r="3" fill="#e8d21d" stroke="none"/><path d="M64.6 5Q67 2.6 69.4 5Q67 7.4 64.6 5Z" fill="#2c9b48" stroke="none"/><path d="M77 7.4L81.4 3M78 3.4Q79.4 2.4 80.6 3.6M79.6 6.6Q81 7 82 5.8" stroke-width=".7" stroke="#d6d9db"/><rect x="98" y="1.6" width="6.6" height="6.6" fill="#1f86e8" stroke="none"/></svg>
  <div class="t" style="left:535.6px;top:327.2px;font-size:5.6px;color:#fff">中</div>
  <div class="t" style="left:547.2px;top:326.6px;font-size:4.6px;color:#fff;font-weight:bold">du</div>
  <div class="t" style="left:558.6px;top:326.8px;font-size:5px;color:#fff;font-weight:bold">10:39</div>
  <svg class="abs" style="left:577.6px;top:325.6px" width="9" height="8" viewBox="0 0 9 8" fill="none" stroke="#fff" stroke-width=".7"><path d="M1 .8H7.6V5.4L6 7H1Z M6 7V5.4H7.6"/></svg>
  <!-- participants window (behind) -->
  <div class="abs" style="left:200px;top:76.5px;width:194.5px;height:170.5px;background:#fff;box-shadow:0 0 3px rgba(0,0,0,.28);overflow:hidden">
    <svg class="abs" style="left:172px;top:1px" width="22" height="8" viewBox="0 0 22 8" fill="none" stroke="#444" stroke-width=".7"><path d="M3 2H7V6H3Z"/><path d="M14.4 2L18 6M18 2L14.4 6"/></svg>
    <div class="abs" style="left:5px;top:16.4px;width:184.5px;height:12px;border:.6px solid #dcdcdc;border-radius:1px;background:#fff"></div>
    <svg class="abs" style="left:8px;top:18.8px" width="7" height="7" viewBox="0 0 7 7" fill="none" stroke="#555" stroke-width=".7"><circle cx="3" cy="3" r="2"/><path d="M4.4 4.4L6 6"/></svg>
    <div class="t" style="left:15px;top:19.8px;font-size:4.8px;color:#aaa">搜索</div>
    <div class="abs" style="left:6.6px;top:33.2px;width:12.6px;height:12.6px;border-radius:50%;background:radial-gradient(circle at 50% 38%,#fff 0 22%,#8f9398 24% 100%);overflow:hidden"><div class="abs" style="left:3.6px;top:7px;width:5.4px;height:6px;border-radius:2.6px 2.6px 0 0;background:#fff"></div></div><div class="abs" style="left:173.6px;top:36.5px;width:2.8px;height:4.6px;border-radius:1.4px;background:#27d36f"></div><svg class="abs" style="left:180.6px;top:36.5px" width="8" height="6" viewBox="0 0 8 6"><rect x=".6" y="1.2" width="4.4" height="3.6" rx=".6" fill="none" stroke="#eb9b97" stroke-width=".5"/><path d="M5 2.6L7.2 1.4V4.6L5 3.4" fill="none" stroke="#eb9b97" stroke-width=".5"/><path d="M1 5.4L5.6 .4" stroke="#e6706b" stroke-width=".55"/></svg>
    <div class="abs" style="left:6.6px;top:50.4px;width:12.6px;height:12.6px;border-radius:50%;background:radial-gradient(circle at 55% 45%,#e9c9b8 0 18%,#c0392b 20% 42%,#1c1417 44% 100%)"></div><svg class="abs" style="left:172px;top:52.7px" width="6" height="8" viewBox="0 0 6 8"><rect x="1.9" y=".6" width="2.2" height="4" rx="1.1" fill="#c9cbce"/><path d="M1 3.6Q1 5.8 3 5.8Q5 5.8 5 3.6M3 5.8V7.2" stroke="#c9cbce" stroke-width=".6" fill="none"/></svg><svg class="abs" style="left:180.6px;top:53.7px" width="8" height="6" viewBox="0 0 8 6"><rect x=".6" y="1.2" width="4.4" height="3.6" rx=".6" fill="none" stroke="#eb9b97" stroke-width=".5"/><path d="M5 2.6L7.2 1.4V4.6L5 3.4" fill="none" stroke="#eb9b97" stroke-width=".5"/><path d="M1 5.4L5.6 .4" stroke="#e6706b" stroke-width=".55"/></svg>
    <div class="abs" style="left:6.6px;top:67.6px;width:12.6px;height:12.6px;border-radius:50%;background:#f3efee;overflow:hidden"><div class="abs" style="left:4px;top:1.6px;width:4px;height:5px;border-radius:50%;background:#4a3a3a"></div><div class="abs" style="left:3.4px;top:6px;width:5.6px;height:7px;background:#8e6a68;transform:skewX(10deg)"></div><div class="abs" style="left:6px;top:8px;width:3.6px;height:4px;background:#c9444a"></div></div><svg class="abs" style="left:172px;top:69.9px" width="6" height="8" viewBox="0 0 6 8"><rect x="1.9" y=".6" width="2.2" height="4" rx="1.1" fill="none" stroke="#eb9b97" stroke-width=".5"/><path d="M1 3.6Q1 5.8 3 5.8Q5 5.8 5 3.6M3 5.8V7.2" stroke="#eb9b97" stroke-width=".5" fill="none"/><path d="M.8 7L5.2 .8" stroke="#e6706b" stroke-width=".6"/></svg><svg class="abs" style="left:180.6px;top:70.9px" width="8" height="6" viewBox="0 0 8 6"><rect x=".6" y="1.2" width="4.4" height="3.6" rx=".6" fill="none" stroke="#eb9b97" stroke-width=".5"/><path d="M5 2.6L7.2 1.4V4.6L5 3.4" fill="none" stroke="#eb9b97" stroke-width=".5"/><path d="M1 5.4L5.6 .4" stroke="#e6706b" stroke-width=".55"/></svg>
    <div class="abs" style="left:6.6px;top:84.4px;width:12.6px;height:12.6px;border-radius:50%;background:#0a6cff"></div><div class="t" style="left:11.4px;top:88.7px;font-size:3px;color:#fff">✦</div><svg class="abs" style="left:172px;top:86.7px" width="6" height="8" viewBox="0 0 6 8"><rect x="1.9" y=".6" width="2.2" height="4" rx="1.1" fill="none" stroke="#eb9b97" stroke-width=".5"/><path d="M1 3.6Q1 5.8 3 5.8Q5 5.8 5 3.6M3 5.8V7.2" stroke="#eb9b97" stroke-width=".5" fill="none"/><path d="M.8 7L5.2 .8" stroke="#e6706b" stroke-width=".6"/></svg><svg class="abs" style="left:180.6px;top:87.7px" width="8" height="6" viewBox="0 0 8 6"><rect x=".6" y="1.2" width="4.4" height="3.6" rx=".6" fill="none" stroke="#eb9b97" stroke-width=".5"/><path d="M5 2.6L7.2 1.4V4.6L5 3.4" fill="none" stroke="#eb9b97" stroke-width=".5"/><path d="M1 5.4L5.6 .4" stroke="#e6706b" stroke-width=".55"/></svg>
    <div class="abs" style="left:6.6px;top:101.9px;width:12.6px;height:12.6px;border-radius:50%;background:linear-gradient(180deg,#232838 0 50%,#7d7f8c 56%,#3a3d4a 70%,#1c1f29 100%)"></div><svg class="abs" style="left:172px;top:104.2px" width="6" height="8" viewBox="0 0 6 8"><rect x="1.9" y=".6" width="2.2" height="4" rx="1.1" fill="none" stroke="#eb9b97" stroke-width=".5"/><path d="M1 3.6Q1 5.8 3 5.8Q5 5.8 5 3.6M3 5.8V7.2" stroke="#eb9b97" stroke-width=".5" fill="none"/><path d="M.8 7L5.2 .8" stroke="#e6706b" stroke-width=".6"/></svg><svg class="abs" style="left:180.6px;top:105.2px" width="8" height="6" viewBox="0 0 8 6"><rect x=".6" y="1.2" width="4.4" height="3.6" rx=".6" fill="none" stroke="#eb9b97" stroke-width=".5"/><path d="M5 2.6L7.2 1.4V4.6L5 3.4" fill="none" stroke="#eb9b97" stroke-width=".5"/><path d="M1 5.4L5.6 .4" stroke="#e6706b" stroke-width=".55"/></svg>
    <div class="abs" style="left:6.6px;top:118.9px;width:12.6px;height:12.6px;border-radius:50%;background:radial-gradient(circle at 45% 50%,#e8cfcf 0 16%,#7b2633 20% 55%,#2a1820 60% 100%)"></div><svg class="abs" style="left:172px;top:121.2px" width="6" height="8" viewBox="0 0 6 8"><rect x="1.9" y=".6" width="2.2" height="4" rx="1.1" fill="none" stroke="#eb9b97" stroke-width=".5"/><path d="M1 3.6Q1 5.8 3 5.8Q5 5.8 5 3.6M3 5.8V7.2" stroke="#eb9b97" stroke-width=".5" fill="none"/><path d="M.8 7L5.2 .8" stroke="#e6706b" stroke-width=".6"/></svg><svg class="abs" style="left:180.6px;top:122.2px" width="8" height="6" viewBox="0 0 8 6"><rect x=".6" y="1.2" width="4.4" height="3.6" rx=".6" fill="none" stroke="#eb9b97" stroke-width=".5"/><path d="M5 2.6L7.2 1.4V4.6L5 3.4" fill="none" stroke="#eb9b97" stroke-width=".5"/><path d="M1 5.4L5.6 .4" stroke="#e6706b" stroke-width=".55"/></svg>
    <div class="abs" style="left:6.6px;top:135.9px;width:12.6px;height:12.6px;border-radius:50%;background:radial-gradient(circle at 50% 45%,#cdb7a3 0 22%,#4f6f86 26% 60%,#6f8f7a 64% 100%)"></div><svg class="abs" style="left:172px;top:138.2px" width="6" height="8" viewBox="0 0 6 8"><rect x="1.9" y=".6" width="2.2" height="4" rx="1.1" fill="none" stroke="#eb9b97" stroke-width=".5"/><path d="M1 3.6Q1 5.8 3 5.8Q5 5.8 5 3.6M3 5.8V7.2" stroke="#eb9b97" stroke-width=".5" fill="none"/><path d="M.8 7L5.2 .8" stroke="#e6706b" stroke-width=".6"/></svg><svg class="abs" style="left:180.6px;top:139.2px" width="8" height="6" viewBox="0 0 8 6"><rect x=".6" y="1.2" width="4.4" height="3.6" rx=".6" fill="none" stroke="#eb9b97" stroke-width=".5"/><path d="M5 2.6L7.2 1.4V4.6L5 3.4" fill="none" stroke="#eb9b97" stroke-width=".5"/><path d="M1 5.4L5.6 .4" stroke="#e6706b" stroke-width=".55"/></svg>
    
    <div class="abs" style="left:0;top:147px;width:194.5px;height:.6px;background:#e8e8e8"></div>
    <div class="abs" style="left:171px;top:155px;width:14px;height:7.6px;background:#0a6cff;border-radius:.6px"></div>
    <div class="abs" style="left:179.4px;top:157px;width:3px;height:.6px;background:#fff;box-shadow:0 1.4px 0 #fff,0 2.8px 0 #fff"></div>
  </div>
  <!-- chat window (front) -->
  <div class="abs" style="left:223px;top:78px;width:148.5px;height:167.5px;background:#fff;box-shadow:0 0 4px rgba(0,0,0,.35);overflow:hidden">
    <div class="abs" style="left:0;top:0;width:148.5px;height:12px;background:#fbfbfc"></div>
    <svg class="abs" style="left:65.6px;top:3.6px" width="6" height="5" viewBox="0 0 6 5"><path d="M.4 .4H5.6V3.6H2.6L1.6 4.6V3.6H.4Z" fill="none" stroke="#555" stroke-width=".6"/><path d="M1.4 2H4.6" stroke="#555" stroke-width=".5"/></svg>
    <div class="t" style="left:73.5px;top:3.6px;font-size:5px;color:#222">聊天</div>
    <svg class="abs" style="left:114px;top:2px" width="34" height="8" viewBox="0 0 34 8" fill="none" stroke="#444" stroke-width=".7"><path d="M3 4.2H7"/><path d="M14.6 2.2H18.4V5.8H14.6Z"/><path d="M26.2 2.2L29.8 5.8M29.8 2.2L26.2 5.8"/></svg>
    <div class="abs" style="left:0;top:12px;width:148.5px;height:108.6px;background:#f8f8fa"></div>
    <div class="t" style="left:0;width:152px;text-align:center;top:14.8px;font-size:5.8px;color:#c9cacd">10:28</div>
    <div class="t" style="left:4.8px;top:23.8px;font-size:5.55px;color:#2b7bf3">sceiic</div>
    <div class="t" style="left:4.8px;top:33px;font-size:5.55px;color:#222">德才兼备</div>
    <div class="t" style="left:0;width:152px;text-align:center;top:41.8px;font-size:5.8px;color:#c9cacd">10:37</div>
    <div class="t" style="left:4.8px;top:50.6px;font-size:5.55px;color:#2b7bf3">sceiic</div>
    <div class="t" style="left:4.8px;top:59.6px;font-size:5.55px;color:#222">找什么样子的工作能在大环境较好的发展</div>
    <div class="t" style="left:4.8px;top:69.4px;font-size:5.55px;color:#2b7bf3">张永固</div>
    <div class="t" style="left:4.8px;top:79.6px;font-size:5.55px;color:#222">对于岗位选择方面，是倾向于已经饱和的岗位，还是有发</div>
    <div class="t" style="left:4.8px;top:89.6px;font-size:5.55px;color:#222">展潜力的岗位</div>
    <div class="t" style="left:5px;top:124.6px;font-size:5px;color:#333">发送至:</div>
    <div class="t" style="left:27.6px;top:124.6px;font-size:5px;color:#2b7bf3">所有人 <span style="font-size:3.4px;vertical-align:.5px">▾</span></div>
    <svg class="abs" style="left:122px;top:122.6px" width="24" height="9" viewBox="0 0 24 9" fill="none" stroke="#555" stroke-width=".6"><path d="M2 2.2H4L4.8 3H6.6V1.8H8.4V7H2Z"/><path d="M10 3.8H11.6L10.8 4.8Z" fill="#777" stroke="none"/><path d="M15.6 2.4H21.6V7.2H15.6ZM17.4 2.4V1.4H19.8V2.4M17 4.8H20.2" /></svg>
    <div class="abs" style="left:4.6px;top:132.6px;width:.6px;height:9px;background:#555"></div>
    <svg class="abs" style="left:59.6px;top:145px" width="4" height="8" viewBox="0 0 4 8" fill="none" stroke="#444" stroke-width=".5"><path d="M.8 .8H3.2M2 .8V7.2M.8 7.2H3.2"/></svg>
    <div class="t" style="left:121px;top:160.2px;font-size:5.2px;color:#b4b6ba">发送(S)</div>
    <svg class="abs" style="left:140px;top:160.6px" width="5" height="4" viewBox="0 0 5 4"><path d="M1 1L2.5 2.6L4 1" fill="none" stroke="#b4b6ba" stroke-width=".5"/></svg>
  </div>
  <!-- collapse handle -->
  <div class="abs" style="left:583px;top:46.8px;width:12px;height:11px;background:#5a5c5f;border-radius:5.5px 0 0 5.5px"><svg class="abs" style="left:3px;top:3px" width="5" height="5" viewBox="0 0 5 5"><path d="M3.4 .8L1.6 2.5L3.4 4.2" stroke="#cfcfcf" stroke-width=".7" fill="none"/></svg></div>
  <!-- green share frame corners -->
  <div class="g" style="left:0;top:0;width:37px;height:2px"></div><div class="g" style="left:0;top:0;width:2px;height:37px"></div>
  <div class="g" style="right:0;top:0;width:38px;height:2px"></div><div class="g" style="right:0;top:0;width:2px;height:37px"></div>
  <div class="g" style="left:0;bottom:0;width:37px;height:2px"></div><div class="g" style="left:0;bottom:0;width:2px;height:37px"></div>
  <div class="g" style="right:0;bottom:0;width:38px;height:2px"></div><div class="g" style="right:0;bottom:0;width:2px;height:37px"></div>
</div>
<div class="tile" style="top:109.6px"><div class="av"><svg width="37" height="37" viewBox="0 0 37 37"><defs><linearGradient id="a1" x1="0" y1="0" x2="1" y2="1"><stop offset="0" stop-color="#d9dbe4"/><stop offset=".5" stop-color="#9a9fad"/><stop offset="1" stop-color="#676c7a"/></linearGradient><filter id="ab" x="-20%" y="-20%" width="140%" height="140%"><feGaussianBlur stdDeviation=".7"/></filter></defs><rect width="37" height="37" fill="url(#a1)"/><g filter="url(#ab)"><path d="M0 14L8 6L6 16L2 24Z" fill="#e6e7ee"/><path d="M28 12L37 8V22L31 20Z" fill="#c9cdd8"/><path d="M7 10Q10 3 18 6Q24 2 27 8Q30 12 27 17Q24 14 20 15Q15 12 11 16Q7 15 7 10Z" fill="#17181d"/><path d="M11 16Q15 12 20 15Q23 15 24 19Q21 25 16 24Q11 22 11 16Z" fill="#b7b9c4"/><path d="M12 15Q16 17 21 16L19 19Q15 20 12 18Z" fill="#55576a"/><path d="M3 30Q8 22 16 24Q21 25 24 21Q30 20 34 26L37 37H2Z" fill="#111217"/><path d="M26 22L33 18L35 24L30 26Z" fill="#2a2c35"/><path d="M14 35H22" stroke="#c9cdd6" stroke-width=".8"/></g></svg></div><div class="lb"><svg width="10" height="12" viewBox="0 0 10 12"><g transform="rotate(14 5 6)"><rect x="3.1" y="0.6" width="3.8" height="6.6" rx="1.9" fill="#fff"/><path d="M1.3 5.2Q1.3 9 5 9Q8.7 9 8.7 5.2" fill="none" stroke="#fff" stroke-width="1"/><path d="M5 9V10.8M3.2 11H6.8" stroke="#fff" stroke-width="1"/></g><path d="M0.6 9.8L9.2 1.2" stroke="#f0453f" stroke-width="1.2"/></svg><span>石英杰</span></div></div>
<div class="tile" style="top:183.4px"><div class="av txtav">李亮</div><div class="lb"><span>李亮</span></div></div>
<div class="tile" style="top:257.3px"><div class="av"><svg width="37" height="37" viewBox="0 0 37 37"><rect width="37" height="37" fill="#5164b4"/><path d="M0 0H18Q30 8 30 22Q30 30 27 37H0Z" fill="#262d60"/><path d="M8 37Q4 20 12 9Q18 3 25 8Q32 15 28 28L26 37Z" fill="#1f2552"/><ellipse cx="17.5" cy="21.5" rx="9" ry="8.6" fill="#f1d5cf"/><path d="M8.6 22Q6.5 10 15 5.6Q24 2 28 11Q30 17 27 20Q26 15 23 13.6Q21 17 19 13Q15 16 11.6 15.4Q9.6 18 8.6 22Z" fill="#4b2f29"/><ellipse cx="13" cy="21.6" rx="1.3" ry="1.7" fill="#1d1620"/><ellipse cx="21.4" cy="21.6" rx="1.3" ry="1.7" fill="#1d1620"/><ellipse cx="10.8" cy="25" rx="1.9" ry="1.1" fill="#eaa5a6"/><ellipse cx="23.6" cy="24.6" rx="1.9" ry="1.1" fill="#eaa5a6"/><path d="M9 37Q10 30.5 16 30L20 30.5Q25 31 26 37Z" fill="#20275a"/><path d="M14.6 29.6L17 32L19.6 29.8Z" fill="#f1d5cf"/></svg></div><div class="lb"><svg width="10" height="12" viewBox="0 0 10 12"><g transform="rotate(14 5 6)"><rect x="3.1" y="0.6" width="3.8" height="6.6" rx="1.9" fill="#fff"/><path d="M1.3 5.2Q1.3 9 5 9Q8.7 9 8.7 5.2" fill="none" stroke="#fff" stroke-width="1"/><path d="M5 9V10.8M3.2 11H6.8" stroke="#fff" stroke-width="1"/></g><path d="M0.6 9.8L9.2 1.2" stroke="#f0453f" stroke-width="1.2"/></svg><span>宋晨旭</span></div></div>
<div class="tile" style="top:331.1px"><div class="av"><svg width="37" height="37" viewBox="0 0 37 37"><rect width="37" height="37" fill="#63cdbd"/><path d="M4 37Q6 29 14 28H24Q32 29 34 37Z" fill="#c43c36"/><ellipse cx="18.5" cy="18" rx="7" ry="9" fill="#efd6d0"/><path d="M10.5 16Q9 6 17 5Q26 3 27.5 12Q28 15 26.5 17Q26 11 22 9Q16 8 12.5 11Q11.5 13 11.5 17Z" fill="#51608f"/><path d="M12 8Q15 2 19 4Q24 2 27 9Q22 6 18 8Z" fill="#4a5988"/><circle cx="15.5" cy="17" r="1" fill="#3a2c2a"/><circle cx="21.8" cy="17" r="1" fill="#3a2c2a"/><path d="M15.5 21.5Q18.5 24.5 22 21.5Q18.7 23 15.5 21.5Z" fill="#fff" stroke="#8a4a3d" stroke-width=".5"/><path d="M16 26Q17 22 20 23Q22 25 21 30L17 31Z" fill="#e2b89c"/></svg></div><div class="lb"><span>张后红</span></div></div>
<div class="tile" style="top:405.0px"><div class="av txtav">钰才</div><div class="lb"><svg width="10" height="12" viewBox="0 0 10 12"><g transform="rotate(14 5 6)"><rect x="3.1" y="0.6" width="3.8" height="6.6" rx="1.9" fill="#fff"/><path d="M1.3 5.2Q1.3 9 5 9Q8.7 9 8.7 5.2" fill="none" stroke="#fff" stroke-width="1"/><path d="M5 9V10.8M3.2 11H6.8" stroke="#fff" stroke-width="1"/></g><path d="M0.6 9.8L9.2 1.2" stroke="#f0453f" stroke-width="1.2"/></svg><span>朱钰才</span></div></div>
<div class="tile" style="top:478.9px"><div class="av"><svg width="37" height="37" viewBox="0 0 37 37"><defs><filter id="a6b" x="-20%" y="-20%" width="140%" height="140%"><feGaussianBlur stdDeviation=".8"/></filter><radialGradient id="a6f" cx=".45" cy=".45" r=".6"><stop offset="0" stop-color="#e4a79c"/><stop offset=".7" stop-color="#c9766f"/><stop offset="1" stop-color="#a8564f"/></radialGradient></defs><rect width="37" height="37" fill="#6b5750"/><g filter="url(#a6b)"><ellipse cx="18" cy="21" rx="15" ry="15" fill="url(#a6f)"/><path d="M2 22Q2 2 19 1Q34 1 36 16Q37 26 33 30Q34 16 26 11Q18 13 11 10Q6 13 5 24Q3 26 2 22Z" fill="#1d1412"/><path d="M8.5 15.6Q11 14.4 13.4 15.4" stroke="#5a302c" stroke-width="1.3" fill="none"/><path d="M20 17Q22.6 16.4 25 18" stroke="#5a302c" stroke-width="1.3" fill="none"/><ellipse cx="16" cy="20.6" rx="3" ry="2.2" fill="#e9b4a8"/><path d="M11 25.4Q14 23.4 18 26" stroke="#8e3f3c" stroke-width="1.3" fill="none"/><path d="M3 30Q10 28 14 32Q22 36 33 28L37 37H0Z" fill="#e99aa0"/></g><rect x="4" y="17" width="4.6" height="4.4" rx=".8" fill="#e3e6e8" transform="rotate(-8 6 19)"/><rect x="22.4" y="21" width="4.4" height="4.6" rx=".8" fill="#e3e6e8" transform="rotate(12 24.5 23)"/></svg></div><div class="lb"><span>代亚洲</span></div></div>
<div id="tip" class="abs">
  <svg class="abs" style="left:8px;top:6px" width="10" height="14" viewBox="0 0 10 14"><rect x="3" y="1" width="4" height="7.4" rx="2" fill="#8b8e93"/><path d="M1.2 6.2Q1.2 10.4 5 10.4Q8.8 10.4 8.8 6.2" fill="none" stroke="#6e7176" stroke-width="1"/><path d="M5 10.4V12.4M3 12.6H7" stroke="#6e7176" stroke-width="1"/></svg>
  <div class="abs" style="left:26px;top:4px;width:1px;height:18px;background:#0f1011"></div>
  <div class="t" style="left:33px;top:9.3px;font-size:9.1px;color:#fff">正在讲话: <span style="font-size:8.9px">Judy–Zhu;</span></div>
  <svg class="abs" style="left:134px;top:4px" width="42" height="19" viewBox="0 0 42 19"><path d="M1 10.5L8.5 2.5L13 8L8.5 17Z" fill="#3a3d41"/><path d="M9.5 10.5L17 2.5L20.5 6V14L17 17Z" fill="#44474b"/><path d="M20.5 1V18" stroke="#55585d" stroke-width="1"/><path d="M23 10L28 5L31 9L27 15Z" fill="#34373b"/><path d="M27.5 9.2L32.6 4.6V7.3Q38.6 7.6 38.8 14.4Q36.6 10.9 32.6 11V13.8Z" fill="#a9acb1"/></svg>
</div>
<div id="notch" class="abs"><div class="r abs"></div>
  <svg class="abs" style="left:6.5px;top:2.5px" width="11" height="10" viewBox="0 0 11 10"><path d="M0.6 2.6H3L6.6 0.4V9.2L3 7H0.6Z" fill="#1ed36b"/><path d="M8 2.2Q9.6 4.8 8 7.4" stroke="#14a552" stroke-width="1.1" fill="none"/></svg>
  <div class="t" style="left:20.8px;top:3.2px;font-size:8.9px;color:#fff">您正在观看Judy–Zhu的屏幕</div>
  <div class="abs" style="left:136px;top:0;width:1px;height:16px;background:#1f2124"></div>
  <svg class="abs" style="left:143px;top:2.6px" width="9" height="8" viewBox="0 0 9 8"><path d="M0.6 1H8.2M0.6 3.8H8.2M0.6 6.6H5" stroke="#e8e9eb" stroke-width=".9"/><path d="M6 5.8H8.6L7.3 7.6Z" fill="#e8e9eb"/></svg>
</div>
<div id="leftstrip" class="abs"></div>
<div id="leftline" class="abs"></div>
<div id="rightstrip" class="abs"></div>
</body>
</html>
